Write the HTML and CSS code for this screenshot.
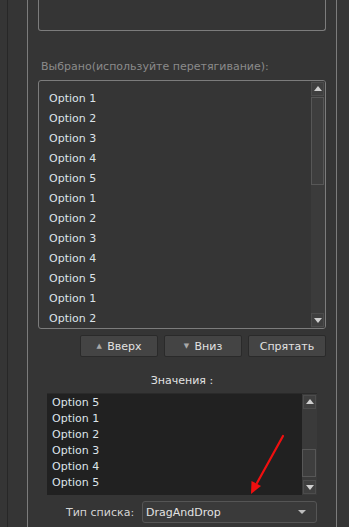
FILE: index.html
```html
<!DOCTYPE html>
<html lang="en">
  <head>
    <meta charset="UTF-8" />
    <link rel="stylesheet" href="styles.css">
    <title>Список</title>
  </head>
  <body>
    <div class="edge"></div>
    <div class="gutter"></div>
    <section class="panel">
      <div class="topBox"></div>

      <p class="caption">Выбрано(используйте перетягивание):</p>
      <div class="listBox">
        <ul class="items">
          <li>Option 1</li>
          <li>Option 2</li>
          <li>Option 3</li>
          <li>Option 4</li>
          <li>Option 5</li>
          <li>Option 1</li>
          <li>Option 2</li>
          <li>Option 3</li>
          <li>Option 4</li>
          <li>Option 5</li>
          <li>Option 1</li>
          <li>Option 2</li>
        </ul>
        <div class="scroll">
          <span class="scrollBtn up"></span>
          <div class="track"><span class="thumb bigThumb"></span></div>
          <span class="scrollBtn down"></span>
        </div>
      </div>

      <div class="buttons">
        <button class="btn"><span class="tri">&#9650;</span> Вверх</button>
        <button class="btn"><span class="tri">&#9660;</span> Вниз</button>
        <button class="btn">Спрятать</button>
      </div>

      <p class="valuesTitle">Значения :</p>
      <div class="valuesBox">
        <ul class="items small">
          <li>Option 5</li>
          <li>Option 1</li>
          <li>Option 2</li>
          <li>Option 3</li>
          <li>Option 4</li>
          <li>Option 5</li>
        </ul>
        <div class="scroll">
          <span class="scrollBtn up"></span>
          <div class="track endThumb"><span class="thumb smallThumb"></span></div>
          <span class="scrollBtn down"></span>
        </div>
      </div>

      <div class="typeRow">
        <label class="typeLabel">Тип списка:</label>
        <div class="combo">
          <span>DragAndDrop</span>
          <span class="comboArrow"></span>
        </div>
      </div>

      <!-- red pointer drawn over the screenshot -->
      <svg class="pointer" width="349" height="527" viewBox="0 0 349 527">
        <line x1="283" y1="436" x2="257" y2="483" stroke="#f00f0f" stroke-width="2.2" stroke-linecap="round" />
        <polygon points="251,494 251.5,481 261,486" fill="#f00f0f" />
      </svg>
    </section>
  </body>
</html>
```

FILE: styles.css
```css
body {
  margin: 0px;
  height: 527px;
  overflow: hidden;
  display: flex;
  background-color: #353535;
  font-family: "DejaVu Sans", sans-serif;
  font-size: 11px;
  color: #dde4ea;
}
.edge {
  width: 7px;
  border-right: 1px solid #272727;
}
.gutter {
  width: 19px;
}
.panel {
  width: 288px;
  padding: 0px 10px;
  border-left: 1px solid #7c7c7c;
  border-right: 1px solid #7c7c7c;
  display: flex;
  flex-direction: column;
}
.topBox {
  height: 30px;
  border: 1px solid #7c7c7c;
  border-top: none;
  border-radius: 0px 0px 3px 3px;
}
.caption {
  margin: 29px 0px 0px 3px;
  height: 20px;
  line-height: 14px;
  color: #8b8b8b;
}
.listBox {
  height: 247px;
  display: flex;
  border: 1px solid #7c7c7c;
  border-radius: 3px;
  overflow: hidden;
}
.items {
  flex: 1;
  list-style: none;
  margin: 0px;
  padding: 8px 0px 0px 10px;
  overflow: hidden;
}
.items li {
  height: 20px;
  line-height: 20px;
}
.items.small {
  padding: 1px 0px 0px 5px;
}
.items.small li {
  height: 16px;
  line-height: 16px;
}
.scroll {
  width: 14px;
  display: flex;
  flex-direction: column;
  background-color: #3b3b3b;
}
.scrollBtn {
  height: 12px;
  margin: 1px 1px 1px 0px;
  border: 1px solid #4c4c4c;
  background-color: #3f3f3f;
  position: relative;
}
.scrollBtn::after {
  content: "";
  position: absolute;
  left: 2px;
  top: 3px;
  border-left: 4px solid transparent;
  border-right: 4px solid transparent;
}
.scrollBtn.up::after {
  border-bottom: 5px solid #cfcfcf;
}
.scrollBtn.down::after {
  border-top: 5px solid #cfcfcf;
  top: 4px;
}
.track {
  flex: 1;
  display: flex;
  flex-direction: column;
}
.thumb {
  margin-right: 1px;
  border: 1px solid #575757;
  background-color: #3e3e3e;
}
.bigThumb {
  height: 86px;
}
.endThumb {
  justify-content: flex-end;
  padding-bottom: 2px;
}
.smallThumb {
  height: 26px;
}
.buttons {
  margin-top: 6px;
  display: flex;
  justify-content: flex-end;
  gap: 6px;
}
.btn {
  width: 78px;
  height: 22px;
  padding: 0px;
  border: 1px solid #2a2a2a;
  border-radius: 2px;
  background-color: #444444;
  color: #e2e2e2;
  font-family: "DejaVu Sans", sans-serif;
  font-size: 11px;
}
.tri {
  font-size: 7px;
  color: #a8a8a8;
  vertical-align: 2px;
  margin-right: 2px;
}
.valuesTitle {
  margin: 17px 0px 0px;
  height: 19px;
  line-height: 14px;
  text-align: center;
  color: #e2e2e2;
}
.valuesBox {
  margin: 0px 9px;
  height: 101px;
  display: flex;
  background-color: #212121;
  border-top: 1px solid #2a2a2a;
}
.valuesBox .scroll {
  width: 15px;
  background-color: #3a3a3a;
}
.valuesBox .scrollBtn {
  height: 12px;
  margin: 1px;
}
.typeRow {
  margin-top: 6px;
  display: flex;
  align-items: center;
  gap: 8px;
  padding-left: 28px;
  padding-right: 9px;
}
.typeLabel {
  color: #d4d4d4;
}
.combo {
  flex: 1;
  height: 20px;
  display: flex;
  align-items: center;
  justify-content: space-between;
  padding: 0px 10px 0px 3px;
  border: 1px solid #555555;
  border-radius: 3px;
  background-color: #3a3a3a;
  color: #e2e2e2;
}
.comboArrow {
  border-left: 4px solid transparent;
  border-right: 4px solid transparent;
  border-top: 4px solid #bdbdbd;
}
.pointer {
  position: absolute;
  left: 0px;
  top: 0px;
  pointer-events: none;
}
```
